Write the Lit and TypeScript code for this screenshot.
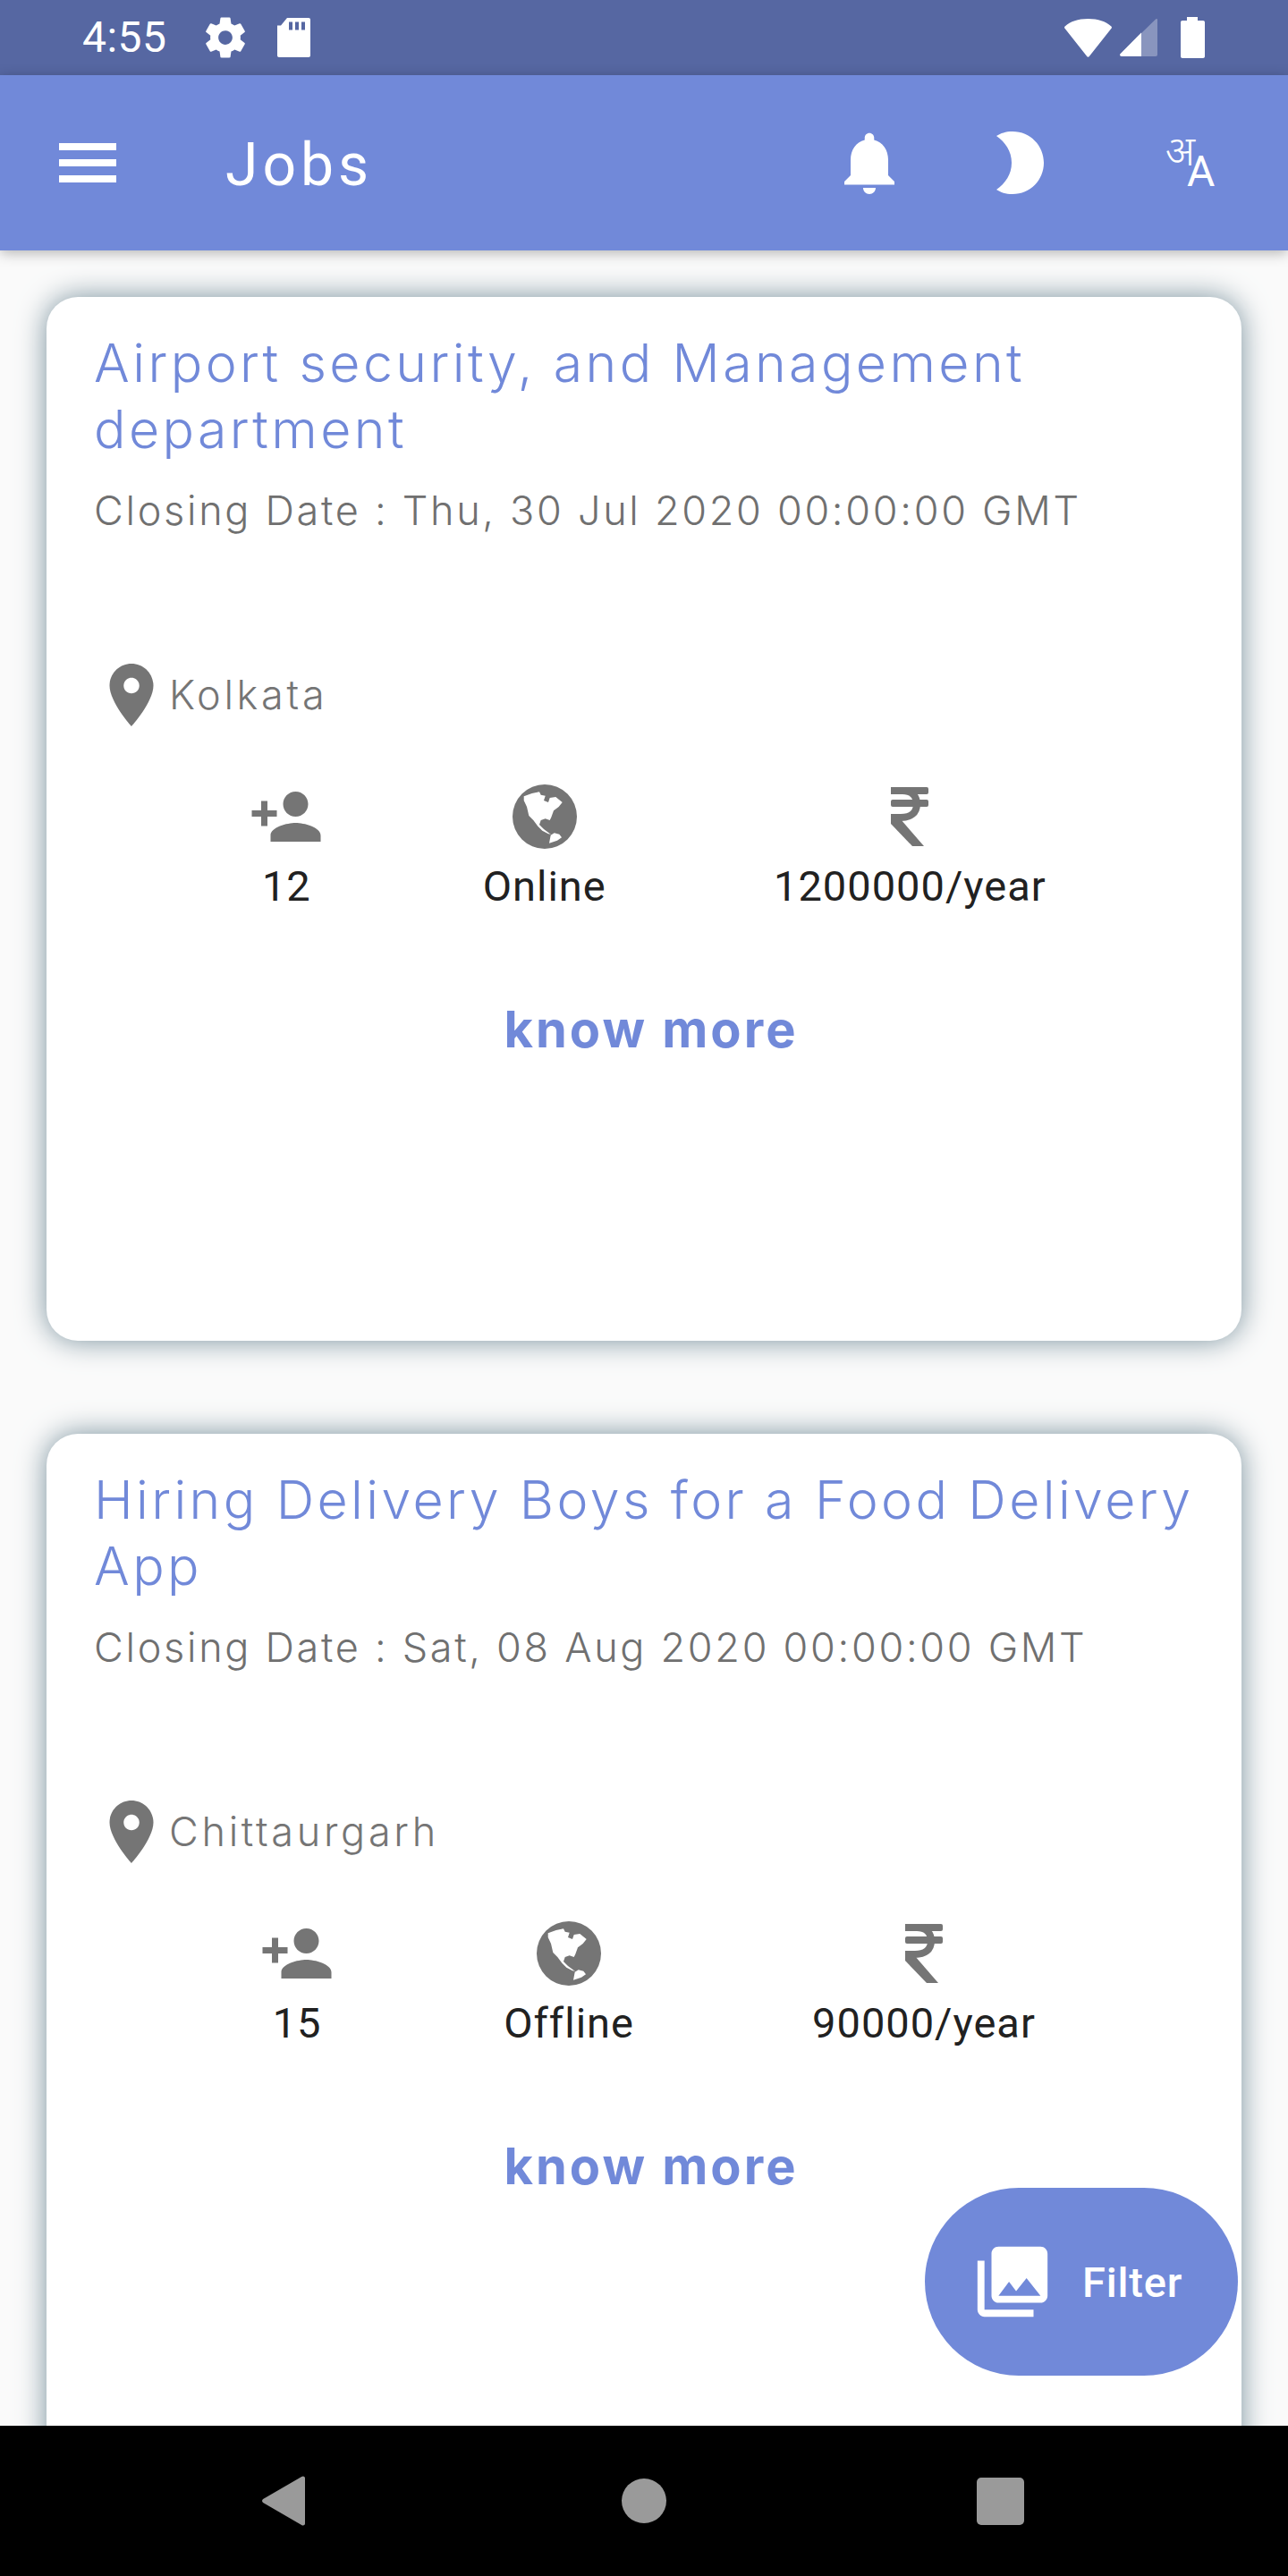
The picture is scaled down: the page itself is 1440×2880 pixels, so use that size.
import { LitElement, html, css, svg } from "lit";
import { customElement } from "lit/decorators.js";

const icon = (d: string, size: number, vb = "0 0 24 24") => html`<svg class="ic" width=${size} height=${size} viewBox=${vb}><path d=${d} /></svg>`;
const P = {
  gear: "M19.43 12.98c.04-.32.07-.64.07-.98s-.03-.66-.07-.98l2.11-1.65c.19-.15.24-.42.12-.64l-2-3.46c-.12-.22-.39-.3-.61-.22l-2.49 1c-.52-.4-1.08-.73-1.69-.98l-.38-2.65C14.46 2.18 14.25 2 14 2h-4c-.25 0-.46.18-.49.42l-.38 2.65c-.61.25-1.17.59-1.69.98l-2.49-1c-.23-.09-.49 0-.61.22l-2 3.46c-.13.22-.07.49.12.64l2.11 1.65c-.04.32-.07.65-.07.98s.03.66.07.98l-2.11 1.65c-.19.15-.24.42-.12.64l2 3.46c.12.22.39.3.61.22l2.49-1c.52.4 1.08.73 1.69.98l.38 2.65c.03.24.24.42.49.42h4c.25 0 .46-.18.49-.42l.38-2.65c.61-.25 1.17-.59 1.69-.98l2.49 1c.23.09.49 0 .61-.22l2-3.46c.12-.22.07-.49-.12-.64l-2.11-1.65zM12 15.5c-1.93 0-3.5-1.57-3.5-3.5s1.57-3.5 3.5-3.5 3.5 1.57 3.5 3.5-1.57 3.5-3.5 3.5z",
  bell: "M12 22c1.1 0 2-.9 2-2h-4c0 1.1.9 2 2 2zm6-6v-5c0-3.07-1.63-5.64-4.5-6.32V4c0-.83-.67-1.5-1.5-1.5s-1.5.67-1.5 1.5v.68C7.64 5.36 6 7.92 6 11v5l-2 2v1h16v-1l-2-2z",
  person: "M15 12c2.21 0 4-1.79 4-4s-1.79-4-4-4-4 1.79-4 4 1.79 4 4 4zm-9-2V7H4v3H1v2h3v3h2v-3h3v-2H6zm9 4c-2.67 0-8 1.34-8 4v2h16v-2c0-2.66-5.33-4-8-4z",
  place: "M12 2C8.13 2 5 5.13 5 9c0 5.25 7 13 7 13s7-7.75 7-13c0-3.87-3.13-7-7-7zm0 9.5c-1.38 0-2.5-1.12-2.5-2.5s1.12-2.5 2.5-2.5 2.5 1.12 2.5 2.5-1.12 2.5-2.5 2.5z",
  photo: "M22 16V4c0-1.1-.9-2-2-2H8c-1.1 0-2 .9-2 2v12c0 1.1.9 2 2 2h12c1.1 0 2-.9 2-2zm-11-4l2.03 2.71L16 11l4 5H8l3-4zM2 6v14c0 1.1.9 2 2 2h14v-2H4V6H2z",
  sd: "M4 8.5L11 0h24c1.2 0 2 .8 2 2v40c0 1.2-.8 2-2 2H2c-1.2 0-2-.8-2-2V8.5zM13 4.500v9h4v-9zM20 4.500v9h4v-9zM27 4.500v9h4v-9z",
  wifi: "M.6 8.400C7 3 15 0 26.500 0S46 3 52.400 8.400c.6.6.7 1.400.3 2.100L28 41.800c-.8 1.300-2.200 1.300-3 0L.3 10.500c-.4-.7-.3-1.500.3-2.100z",
  moon: "M0 5C5 2 10 0 18 0c20 0 35 16 35 35S38 70 18 70c-8 0-13-2-18-5 10-7 17-17 17-30S10 12 0 5z",
  globe: "M36 0a36 36 0 1 0 0 72a36 36 0 1 0 0-72zM12.700 13.300L21.700 10L30 8.300L31.700 11.700L36.700 12.700L35 18L40 20L41.700 15L48.300 14L55.700 20L51.700 25L46 29.300L43.300 36.700L41.700 40L36.700 38.300L31.700 40L30 45L35 50L41.700 55L43.300 55.700L40 55.300L33.300 51.700L28.300 46.700L23.300 40L18.300 35L16 25L12.700 18zM41 65.700L42.700 56.700L46.700 54.300L52.300 55.700L55 59.300L50 62.700z",
};

const rupee = html`<svg class="ic rupee" width="42" height="66" viewBox="0 0 42 66">
  <rect x="0" y="0" width="42" height="8" rx="2" /><rect x="0" y="14" width="42" height="8" rx="2" />
  <path d="M0 4H13C24 4 29 11 29 19C29 29 22 34 11 34H0" fill="none" stroke="#757575" stroke-width="8" />
  <path d="M0 30V41L24 66H37L11 36z" />
</svg>`;

const globeIcon = html`<svg class="ic globe" width="72" height="72" viewBox="0 0 72 72"><path fill-rule="evenodd" d=${P.globe} /></svg>`;

interface Job { title: string; date: string; city: string; n: string; mode: string; pay: string }
const jobs: Job[] = [
  { title: "Airport security, and Management department", date: "Closing Date : Thu, 30 Jul 2020 00:00:00 GMT", city: "Kolkata", n: "12", mode: "Online", pay: "1200000/year" },
  { title: "Hiring Delivery Boys for a Food Delivery App", date: "Closing Date : Sat, 08 Aug 2020 00:00:00 GMT", city: "Chittaurgarh", n: "15", mode: "Offline", pay: "90000/year" },
];

@customElement("app-root")
export class AppRoot extends LitElement {
  static styles = css`
    :host { display: block; width: 1440px; height: 2880px; position: relative; overflow: hidden; background: #fafafa; font-family: Roboto, sans-serif; }
    .page { display: flex; flex-direction: column; height: 2880px; }
    .status { height: 84px; flex: none; background: #5667a2; display: flex; align-items: center; color: #fff; padding: 0 93px 0 92px; box-sizing: border-box; }
    .time { font-size: 48px; line-height: 84px; width: 133px; letter-spacing: .5px; }
    .status svg { fill: #fff; display: block; }
    .sd { margin-left: 31px; margin-top: -1px; }
    .spacer { flex: 1; }
    .sig { margin-left: 9px; }
    .batt { margin-left: 26px; }
    .bar { height: 196px; flex: none; background: #7189d9; display: flex; align-items: center; box-sizing: border-box; padding: 0 0 0 66px; color: #fff; box-shadow: 0 3px 14px rgba(0,0,0,.28); position: relative; z-index: 2; }
    .burger { width: 64px; display: flex; flex-direction: column; gap: 10px; margin-top: 0; }
    .burger i { display: block; height: 8px; background: #fff; }
    .jobs { font-size: 66px; font-weight: 400; letter-spacing: 5px; margin: 6px 0 0 122px; line-height: 80px; }
    .bar svg { fill: #fff; display: block; }
    .moon { margin-left: 100px; }
    .tr { margin-left: 136px; margin-right: 67px; }
    .tr text.d { font: 300 46px "Noto Sans", sans-serif; }
    .tr text.a { font: 400 48px Roboto, sans-serif; }
    .list { flex: 1; min-height: 0; overflow: hidden; padding: 52px 52px 0; display: flex; flex-direction: column; gap: 104px; }
    .card { flex: none; height: 1167px; box-sizing: border-box; background: #fff; border-radius: 35px; box-shadow: 0 0 32px #78909c; padding: 37px 53px 0 53px; }
    h2 { margin: 0 -30px 0 0; font: 300 59px/74px Inter, sans-serif; color: #7189d9; letter-spacing: 3.400px; }
    .date { margin: 24px 0 0; font: 300 45px/60px Inter, sans-serif; color: #707070; letter-spacing: 2.700px; white-space: nowrap; }
    .loc { display: flex; align-items: center; margin-top: 134px; height: 84px; font: 300 45px/60px Inter, sans-serif; color: #757575; letter-spacing: 3.700px; }
    .loc span { margin-left: 0; }
    .ic { fill: #757575; display: block; }
    .stats { display: flex; justify-content: space-evenly; margin: 52px -22px 0 -14px; }
    .stat { display: flex; flex-direction: column; align-items: center; }
    .stat:first-child { margin-right: -10px; }
    .box { height: 84px; display: flex; align-items: center; justify-content: center; }
    .stat p { margin: 8px 0 0; font: 400 47px/56px Roboto, sans-serif; color: #212121; white-space: nowrap; letter-spacing: 1px; }
    .more { margin: 100px 0 0; padding-left: 16px; text-align: center; font: 700 56px/64px Inter, sans-serif; color: #7189d9; letter-spacing: 3px; }
    .nav { height: 168px; flex: none; background: #000; display: flex; align-items: center; position: relative; z-index: 3; }
    .nav svg { display: block; fill: #9a9a9a; }
    .back { margin-left: 293px; }
    .home { margin-left: 354px; }
    .recent { margin-left: 347px; }
    .fab { position: absolute; left: 1034px; top: 2446px; width: 350px; height: 210px; border-radius: 105px; background: #7189d9; display: flex; align-items: center; color: #fff; font: 500 47px Roboto, sans-serif; letter-spacing: .8px; z-index: 2; }
    .fab svg { fill: #fff; margin-left: 51px; display: block; }
    .fab span { margin-left: 31px; }
  `;

  private card(j: Job) {
    return html`<article class="card">
      <h2>${j.title}</h2>
      <p class="date">${j.date}</p>
      <div class="loc">${icon(P.place, 84)}<span>${j.city}</span></div>
      <div class="stats">
        <div class="stat"><div class="box">${icon(P.person, 84)}</div><p>${j.n}</p></div>
        <div class="stat"><div class="box">${globeIcon}</div><p>${j.mode}</p></div>
        <div class="stat"><div class="box">${rupee}</div><p>${j.pay}</p></div>
      </div>
      <p class="more">know more</p>
    </article>`;
  }

  render() {
    return html`<div class="page">
      <header class="status">
        <span class="time">4:55</span>
        ${icon(P.gear, 54)}
        <svg class="sd" width="37" height="44" viewBox="0 0 37 44"><path fill-rule="evenodd" d=${P.sd} /></svg>
        <span class="spacer"></span>
        <svg width="53" height="43" viewBox="0 0 53 43"><path d=${P.wifi} /></svg>
        <svg class="sig" width="42" height="42" viewBox="0 0 42 42">
          <path opacity=".3" d="M41 0c.6 0 1 .5 1 1v39c0 1-.7 2-2 2H2c-1.500 0-2.500-1.500-1.500-2.800L40 .5c.3-.3.6-.5 1-.5z" />
          <path d="M24 15.500V42H2c-1.500 0-2.500-1.500-1.500-2.800z" />
        </svg>
        <svg class="batt" width="27" height="46" viewBox="0 0 27 46"><path d="M7 0h12v4h6c1.200 0 2 .8 2 2v38c0 1.200-.8 2-2 2H2c-1.200 0-2-.8-2-2V6c0-1.200.8-2 2-2h5z" /></svg>
      </header>
      <div class="bar">
        <div class="burger"><i></i><i></i><i></i></div>
        <span class="jobs">Jobs</span>
        <span class="spacer"></span>
        <span class="bell">${icon(P.bell, 84)}</span>
        <svg class="moon" width="53" height="70" viewBox="0 0 53 70"><path d=${P.moon} /></svg>
        <svg class="tr" width="70" height="110" viewBox="0 -25 70 110">
          ${svg`<text class="d" x="0" y="33" fill="#fff">अ</text><text class="a" x="24" y="56" fill="#fff">A</text>`}
        </svg>
      </div>
      <main class="list">${jobs.map((j) => this.card(j))}</main>
      <nav class="nav">
        <svg class="back" width="48" height="56" viewBox="0 0 44 56" preserveAspectRatio="none"><path d="M42 .5c1 0 2 .8 2 2v51c0 1.200-1 2-2 2-.5 0-1-.2-1.500-.6L1 30c-1.300-1-1.300-3 0-4L40.500 1c.5-.3 1-.5 1.500-.5z" /></svg>
        <svg class="home" width="50" height="50" viewBox="0 0 50 50"><circle cx="25" cy="25" r="25" /></svg>
        <svg class="recent" width="53" height="53" viewBox="0 0 53 53"><rect width="53" height="53" rx="5" /></svg>
      </nav>
      <div class="fab">${icon(P.photo, 94)}<span>Filter</span></div>
    </div>`;
  }
}
